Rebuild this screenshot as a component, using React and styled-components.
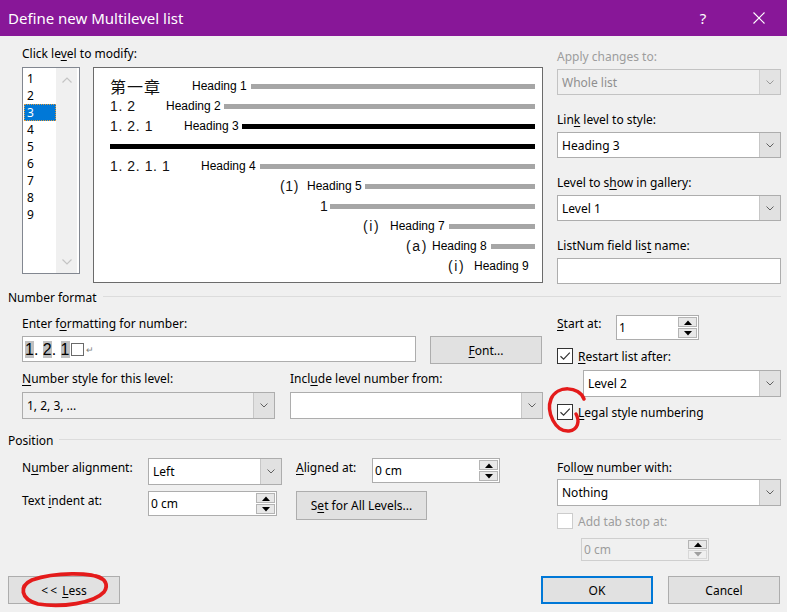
import React from 'react'
import styled, { createGlobalStyle } from 'styled-components'

const GlobalStyle = createGlobalStyle`
  html, body {
    margin: 0;
    padding: 0;
    background: #f0f0f0;
  }
  body {
    font-family: "Noto Sans", "Open Sans", sans-serif;
    font-size: 12px;
    color: #000;
  }
  * {
    box-sizing: border-box;
  }
`

// 미리보기 행: 번호 시작 x, 제목 시작 x, 막대 시작 x (절대 좌표 기준)
const previewRows = [
  { num: '第一章', cjk: true, x: 110, label: 'Heading 1', lx: 192, bx: 251 },
  { num: '1. 2', x: 110, label: 'Heading 2', lx: 166, bx: 224 },
  { num: '1. 2. 1', x: 110, label: 'Heading 3', lx: 184, bx: 242, dark: true },
  { x: 110, bx: 110, dark: true },
  { num: '1. 2. 1. 1', x: 110, label: 'Heading 4', lx: 201, bx: 260 },
  { num: '(1)', x: 280, label: 'Heading 5', lx: 307, bx: 365 },
  { num: '1', x: 320, bx: 330 },
  { num: '(i)', x: 363, label: 'Heading 7', lx: 390, bx: 449, wide: true },
  { num: '(a)', x: 406, label: 'Heading 8', lx: 432, bx: 491, wide: true },
  { num: '(i)', x: 448, label: 'Heading 9', lx: 474, wide: true },
]

const PREVIEW_LEFT = 94

const Chevron = ({ color = '#606060' }) => (
  <svg width="8" height="5" viewBox="0 0 8 5">
    <path d="M0.5 0.5 L4 4 L7.5 0.5" fill="none" stroke={color} strokeWidth="1" />
  </svg>
)

const ChevronUp = () => (
  <svg width="10" height="6" viewBox="0 0 10 6">
    <path d="M0.5 5.5 L5 1 L9.5 5.5" fill="none" stroke="#c4c4c4" strokeWidth="1.2" />
  </svg>
)

const ChevronDown = () => (
  <svg width="10" height="6" viewBox="0 0 10 6">
    <path d="M0.5 0.5 L5 5 L9.5 0.5" fill="none" stroke="#c4c4c4" strokeWidth="1.2" />
  </svg>
)

const Triangle = ({ up, color = '#000' }) => (
  <svg width="8" height="5" viewBox="0 0 8 5">
    <path d={up ? 'M0 5 L4 0.5 L8 5 Z' : 'M0 0 L4 4.5 L8 0 Z'} fill={color} />
  </svg>
)

const CheckMark = () => (
  <svg width="14" height="14" viewBox="0 0 14 14">
    <path d="M2.5 7.2 L5.6 10.2 L11.8 3.6" fill="none" stroke="#333" strokeWidth="1.2" />
  </svg>
)

const Select = ({ value, width, height = 26, disabled, readonly }) => (
  <SelectBox $width={width} $height={height} $disabled={disabled} $readonly={readonly}>
    <SelectValue>{value}</SelectValue>
    <SelectArrow $disabled={disabled}>
      <Chevron color={disabled ? '#9a9a9a' : '#606060'} />
    </SelectArrow>
  </SelectBox>
)

const Spinner = ({ value, width, height = 25, disabled }) => (
  <SpinBox $width={width} $height={height} $disabled={disabled}>
    <SpinValue $disabled={disabled}>{value}</SpinValue>
    <SpinButtons>
      <SpinButton>
        <Triangle up />
      </SpinButton>
      <SpinButton $disabled={disabled}>
        <Triangle color={disabled ? '#a0a0a0' : '#000'} />
      </SpinButton>
    </SpinButtons>
  </SpinBox>
)

const Checkbox = ({ checked, disabled, children }) => (
  <CheckRow $disabled={disabled}>
    <CheckBoxSquare $disabled={disabled}>{checked && <CheckMark />}</CheckBoxSquare>
    <span>{children}</span>
  </CheckRow>
)

export default function App() {
  return (
    <>
      <GlobalStyle />
      <Dialog>
        <TitleBar>
          <TitleText>Define new Multilevel list</TitleText>
          <TitleButtons>
            <TitleButton>?</TitleButton>
            <TitleButton>
              <svg width="12" height="12" viewBox="0 0 12 12">
                <path d="M0.5 0.5 L11.5 11.5 M11.5 0.5 L0.5 11.5" stroke="#fff" strokeWidth="1.1" />
              </svg>
            </TitleButton>
          </TitleButtons>
        </TitleBar>

        <TopSection>
          <LeftCol>
            <Label>
              Click le<u>v</u>el to modify:
            </Label>
            <PreviewArea>
              <LevelList>
                <LevelItems>
                  {[1, 2, 3, 4, 5, 6, 7, 8, 9].map((n) => (
                    <LevelItem key={n} $selected={n === 3}>
                      {n}
                    </LevelItem>
                  ))}
                </LevelItems>
                <ScrollTrack>
                  <ChevronUp />
                  <ChevronDown />
                </ScrollTrack>
              </LevelList>
              <Preview>
                {previewRows.map((row, i) => {
                  const numEnd = row.lx ?? row.bx ?? row.x + 30
                  return (
                    <PreviewRow key={i} $indent={row.x - PREVIEW_LEFT}>
                      {row.num && (
                        <NumText $width={numEnd - row.x} $cjk={row.cjk} $wide={row.wide}>
                          {row.num}
                        </NumText>
                      )}
                      {row.label && (
                        <HeadLabel $width={row.bx ? row.bx - row.lx : null}>{row.label}</HeadLabel>
                      )}
                      {row.bx && <Bar $dark={row.dark} />}
                    </PreviewRow>
                  )
                })}
              </Preview>
            </PreviewArea>
          </LeftCol>

          <RightCol $pt={3}>
            <FieldGroup>
              <Label $disabled>Apply changes to:</Label>
              <Select value="Whole list" disabled />
            </FieldGroup>
            <FieldGroup>
              <Label>
                Lin<u>k</u> level to style:
              </Label>
              <Select value="Heading 3" />
            </FieldGroup>
            <FieldGroup>
              <Label>
                Level to s<u>h</u>ow in gallery:
              </Label>
              <Select value="Level 1" />
            </FieldGroup>
            <FieldGroup $last>
              <Label>
                ListNum field lis<u>t</u> name:
              </Label>
              <TextBox $height={26} />
            </FieldGroup>
          </RightCol>
        </TopSection>

        <GroupHeader $mt={5}>
          <span>Number format</span>
          <GroupLine />
        </GroupHeader>

        <SectionBody>
          <LeftCol $pt={11}>
            <Label>
              Enter f<u>o</u>rmatting for number:
            </Label>
            <InputRow>
              <TextBox $width={394} $height={26}>
                <FormatText>
                  <Hl>1</Hl>. <Hl>2</Hl>. <Hl>1</Hl>
                </FormatText>
                <TabBox />
                <ReturnMark>↵</ReturnMark>
              </TextBox>
              <Button $width={112} $height={28}>
                <span>
                  <u>F</u>ont...
                </span>
              </Button>
            </InputRow>
            <SplitRow>
              <SplitCol $width={253}>
                <Label>
                  <u>N</u>umber style for this level:
                </Label>
                <Select value="1, 2, 3, ..." height={27} readonly />
              </SplitCol>
              <SplitCol $width={253}>
                <Label>
                  Incl<u>u</u>de level number from:
                </Label>
                <Select value="" height={27} />
              </SplitCol>
            </SplitRow>
          </LeftCol>

          <RightCol $pt={10}>
            <StartRow>
              <Label>
                <u>S</u>tart at:
              </Label>
              <Spinner value="1" width={83} />
            </StartRow>
            <CheckWrap $mt={8}>
              <Checkbox checked>
                <u>R</u>estart list after:
              </Checkbox>
            </CheckWrap>
            <Indented $ml={26} $mt={6}>
              <Select value="Level 2" height={27} />
            </Indented>
            <CheckWrap $mt={7}>
              <Checkbox checked>
                <u>L</u>egal style numbering
              </Checkbox>
            </CheckWrap>
          </RightCol>
        </SectionBody>

        <GroupHeader $mt={12}>
          <span>Position</span>
          <GroupLine />
        </GroupHeader>

        <SectionBody>
          <LeftCol $pt={10}>
            <PositionGrid>
              <GridLabel>
                N<u>u</u>mber alignment:
              </GridLabel>
              <Select value="Left" width={134} height={27} />
              <GridLabel>
                <u>A</u>ligned at:
              </GridLabel>
              <Spinner value="0 cm" width={128} />
              <GridLabel>
                Text <u>i</u>ndent at:
              </GridLabel>
              <Spinner value="0 cm" width={129} />
              <GridSpan>
                <Button $width={131} $height={29}>
                  <span>
                    S<u>e</u>t for All Levels...
                  </span>
                </Button>
              </GridSpan>
            </PositionGrid>
          </LeftCol>

          <RightCol $pt={12}>
            <Label>
              Follo<u>w</u> number with:
            </Label>
            <Indented $mt={3}>
              <Select value="Nothing" height={27} />
            </Indented>
            <CheckWrap $mt={7}>
              <Checkbox disabled>Add tab stop at:</Checkbox>
            </CheckWrap>
            <Indented $ml={24} $mt={9}>
              <Spinner value="0 cm" width={128} height={23} disabled />
            </Indented>
          </RightCol>
        </SectionBody>

        <ButtonBar>
          <Button $width={112} $height={28}>
            <span>
              <LessArrows>&lt;&lt;</LessArrows> <u>L</u>ess
            </span>
          </Button>
          <Spacer />
          <Button $width={112} $height={28} $default>
            OK
          </Button>
          <Button $width={112} $height={28}>
            Cancel
          </Button>
        </ButtonBar>

        {/* 빨간 펜 표시 (스크린샷 위 덧그림) */}
        <Annotations width="787" height="612" viewBox="0 0 787 612">
          <path
            d="M584 399 C579 386 557 385 551 399 C546 412 555 432 569 431 C578 430 580 421 576 414"
            fill="none"
            stroke="#e41b1b"
            strokeWidth="3.5"
            strokeLinecap="round"
          />
          <path
            d="M102 579 C92 572 55 572 32 580 C19 586 20 599 38 604 C62 608 94 603 104 592 C109 585 105 578 96 576"
            fill="none"
            stroke="#e41b1b"
            strokeWidth="3.8"
            strokeLinecap="round"
          />
        </Annotations>
      </Dialog>
    </>
  )
}

const Dialog = styled.div`
  position: relative;
  width: 787px;
  height: 612px;
  overflow: hidden;
  background: #f0f0f0;
`

const TitleBar = styled.div`
  display: flex;
  align-items: center;
  height: 36px;
  padding-left: 8px;
  background: #881798;
  color: #fff;
`

const TitleText = styled.div`
  flex: 1;
  font-size: 15px;
`

const TitleButtons = styled.div`
  display: flex;
  height: 100%;
`

const TitleButton = styled.div`
  display: flex;
  align-items: center;
  justify-content: center;
  width: 56px;
  height: 100%;
  font-size: 15px;
`

const TopSection = styled.div`
  display: flex;
  gap: 14px;
  padding: 10px 6px 0 22px;
`

const LeftCol = styled.div`
  display: flex;
  flex-direction: column;
  width: 521px;
  padding-top: ${({ $pt }) => $pt || 0}px;
`

const RightCol = styled.div`
  display: flex;
  flex-direction: column;
  width: 224px;
  padding-top: ${({ $pt }) => $pt || 0}px;
`

const Label = styled.div`
  height: 16px;
  line-height: 16px;
  white-space: nowrap;
  color: ${({ $disabled }) => ($disabled ? '#9d9d9d' : '#000')};

  & u {
    text-underline-offset: 2px;
  }
`

const PreviewArea = styled.div`
  display: flex;
  align-items: flex-start;
  gap: 13px;
  margin-top: 5px;
`

const LevelList = styled.div`
  display: flex;
  width: 58px;
  height: 207px;
  border: 1px solid #828790;
  background: #fff;
`

const LevelItems = styled.div`
  display: flex;
  flex-direction: column;
  width: 33px;
  padding: 2px 0 0 1px;
`

const LevelItem = styled.div`
  height: 17px;
  line-height: 17px;
  padding-left: 3px;
  background: ${({ $selected }) => ($selected ? '#0078d7' : 'transparent')};
  color: ${({ $selected }) => ($selected ? '#fff' : '#000')};
  outline: ${({ $selected }) => ($selected ? '1px dotted #e09a3c' : 'none')};
  outline-offset: -1px;
`

const ScrollTrack = styled.div`
  display: flex;
  flex-direction: column;
  justify-content: space-between;
  align-items: center;
  width: 21px;
  padding: 9px 0 8px;
  background: #f0f0f0;
`

const Preview = styled.div`
  display: flex;
  flex-direction: column;
  width: 450px;
  height: 216px;
  padding: 8px 7px 0 0;
  border: 1px solid #6b6b6b;
  background: #fff;
`

const PreviewRow = styled.div`
  display: flex;
  align-items: center;
  height: 20px;
  padding-left: ${({ $indent }) => $indent}px;
`

const NumText = styled.span`
  flex: none;
  width: ${({ $width }) => $width}px;
  font-family: ${({ $cjk }) =>
    $cjk ? '"Noto Sans CJK SC", sans-serif' : '"Liberation Sans", Arial, sans-serif'};
  font-size: ${({ $cjk }) => ($cjk ? 16 : 14)}px;
  letter-spacing: ${({ $cjk, $wide }) => ($cjk ? 1 : $wide ? 1.6 : 0.6)}px;
  white-space: nowrap;
  color: #111;
`

const HeadLabel = styled.span`
  flex: none;
  width: ${({ $width }) => ($width ? `${$width}px` : 'auto')};
  font-family: "Liberation Sans", Arial, sans-serif;
  font-size: 12px;
  white-space: nowrap;
  color: #000;
`

const Bar = styled.div`
  flex: 1;
  height: 5px;
  background: ${({ $dark }) => ($dark ? '#000' : '#a6a6a6')};
`

const FieldGroup = styled.div`
  display: flex;
  flex-direction: column;
  gap: 4px;
  margin-bottom: ${({ $last }) => ($last ? 0 : 17)}px;
`

const SelectBox = styled.div`
  display: flex;
  align-items: stretch;
  width: ${({ $width }) => ($width ? `${$width}px` : '100%')};
  height: ${({ $height }) => $height}px;
  border: 1px solid ${({ $disabled }) => ($disabled ? '#c3c3c3' : '#adadad')};
  background: ${({ $disabled, $readonly }) => ($disabled || $readonly ? '#f0f0f0' : '#fff')};
  color: ${({ $disabled }) => ($disabled ? '#8f8f8f' : '#000')};
`

const SelectValue = styled.div`
  flex: 1;
  display: flex;
  align-items: center;
  padding-left: 4px;
  white-space: nowrap;
`

const SelectArrow = styled.div`
  display: flex;
  align-items: center;
  justify-content: center;
  width: 21px;
  border-left: 1px solid ${({ $disabled }) => ($disabled ? '#d0d0d0' : '#c7c7c7')};
  background: ${({ $disabled }) => ($disabled ? '#e3e3e3' : '#e1e1e1')};
`

const TextBox = styled.div`
  display: flex;
  align-items: center;
  width: ${({ $width }) => ($width ? `${$width}px` : '100%')};
  height: ${({ $height }) => $height}px;
  padding-left: 2px;
  border: 1px solid #adadad;
  background: #fff;
`

const FormatText = styled.span`
  font-family: "Liberation Sans", Arial, sans-serif;
  font-size: 16px;
  line-height: 21px;
  white-space: pre;
`

const Hl = styled.span`
  background: #c0c0c0;
`

const TabBox = styled.span`
  width: 13px;
  height: 13px;
  margin-left: 1px;
  border: 1px solid #6a6a6a;
`

const ReturnMark = styled.span`
  margin-left: 2px;
  font-size: 9px;
  color: #808080;
`

const InputRow = styled.div`
  display: flex;
  align-items: flex-start;
  justify-content: space-between;
  margin-top: 4px;
  padding-right: 1px;
`

const SplitRow = styled.div`
  display: flex;
  justify-content: space-between;
  margin-top: 7px;
`

const SplitCol = styled.div`
  display: flex;
  flex-direction: column;
  gap: 5px;
  width: ${({ $width }) => $width}px;
`

const Button = styled.div`
  display: flex;
  align-items: center;
  justify-content: center;
  width: ${({ $width }) => $width}px;
  height: ${({ $height }) => $height}px;
  border: ${({ $default }) => ($default ? '2px solid #0078d7' : '1px solid #adadad')};
  background: #e1e1e1;
  white-space: nowrap;

  & u {
    text-underline-offset: 2px;
  }
`

const LessArrows = styled.span`
  letter-spacing: 2px;
`

const StartRow = styled.div`
  display: flex;
  align-items: flex-start;

  & > ${Label} {
    width: 59px;
    margin-top: 1px;
  }
`

const SpinBox = styled.div`
  display: flex;
  width: ${({ $width }) => $width}px;
  height: ${({ $height }) => $height}px;
  border: 1px solid ${({ $disabled }) => ($disabled ? '#cfcfcf' : '#adadad')};
  background: ${({ $disabled }) => ($disabled ? '#f0f0f0' : '#fff')};
`

const SpinValue = styled.div`
  flex: 1;
  display: flex;
  align-items: center;
  padding-left: 2px;
  color: ${({ $disabled }) => ($disabled ? '#9d9d9d' : '#000')};
`

const SpinButtons = styled.div`
  display: flex;
  flex-direction: column;
  gap: 1px;
  width: 20px;
  padding: 1px 1px 1px 0;
`

const SpinButton = styled.div`
  flex: 1;
  display: flex;
  align-items: center;
  justify-content: center;
  border: 1px solid ${({ $disabled }) => ($disabled ? '#d8d8d8' : '#b4b4b4')};
  background: ${({ $disabled }) => ($disabled ? '#f0f0f0' : '#e8e8e8')};
`

const CheckWrap = styled.div`
  margin-top: ${({ $mt }) => $mt || 0}px;
`

const CheckRow = styled.div`
  display: flex;
  align-items: center;
  gap: 5px;
  height: 16px;
  color: ${({ $disabled }) => ($disabled ? '#9d9d9d' : '#000')};

  & u {
    text-underline-offset: 2px;
  }
`

const CheckBoxSquare = styled.div`
  display: flex;
  align-items: center;
  justify-content: center;
  width: 16px;
  height: 16px;
  border: 1px solid ${({ $disabled }) => ($disabled ? '#cccccc' : '#333')};
  background: #fff;
`

const Indented = styled.div`
  margin-left: ${({ $ml }) => $ml || 0}px;
  margin-top: ${({ $mt }) => $mt || 0}px;
`

const GroupHeader = styled.div`
  display: flex;
  align-items: center;
  gap: 6px;
  height: 16px;
  margin: ${({ $mt }) => $mt}px 6px 0 8px;
`

const GroupLine = styled.div`
  flex: 1;
  height: 1px;
  margin-top: -1px;
  background: #dcdcdc;
`

const SectionBody = styled.div`
  display: flex;
  align-items: flex-start;
  gap: 14px;
  padding: 0 6px 0 22px;
`

const PositionGrid = styled.div`
  display: grid;
  grid-template-columns: 126px 148px 76px auto;
  grid-template-rows: 27px 29px;
  row-gap: 6px;
  align-items: start;
`

const GridLabel = styled(Label)`
  margin-top: 2px;
`

const GridSpan = styled.div`
  grid-column: 3 / 5;
`

const ButtonBar = styled.div`
  display: flex;
  gap: 15px;
  margin-top: 15px;
  padding: 0 7px 0 8px;
`

const Spacer = styled.div`
  flex: 1;
`

const Annotations = styled.svg`
  position: absolute;
  top: 0;
  left: 0;
  pointer-events: none;
`
